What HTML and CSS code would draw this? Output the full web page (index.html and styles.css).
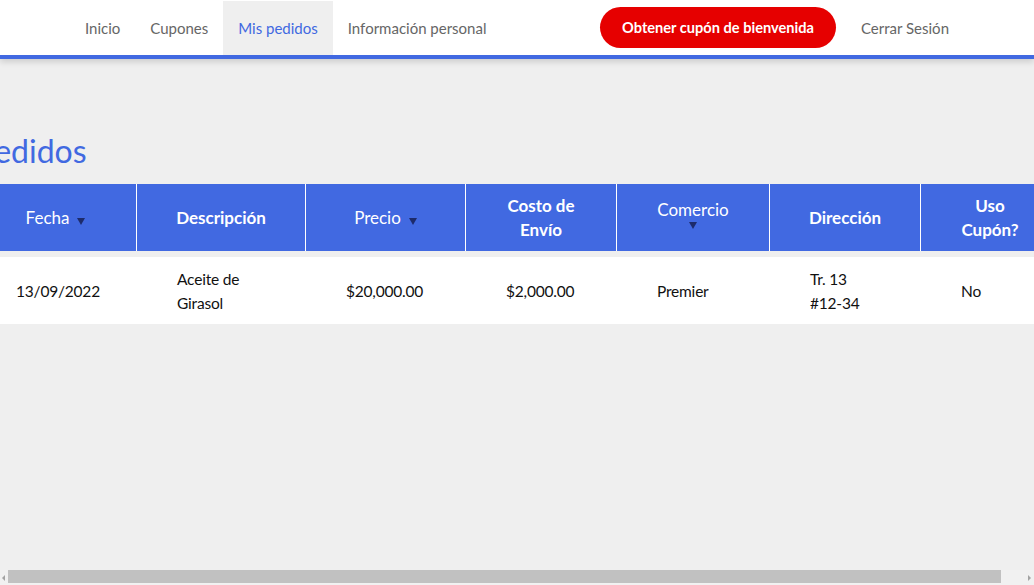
FILE: index.html
```html
<!DOCTYPE html>
<html lang="es">
<head>
<meta charset="utf-8">
<title>Mis pedidos</title>
<link rel="stylesheet" href="styles.css">
</head>
<body>
<header class="topbar">
  <nav class="nav-left">
    <a class="nav-link" href="#">Inicio</a>
    <a class="nav-link" href="#">Cupones</a>
    <a class="nav-link active" href="#">Mis pedidos</a>
    <a class="nav-link" href="#">Información personal</a>
  </nav>
  <div class="nav-right">
    <a class="coupon-btn" href="#">Obtener cupón de bienvenida</a>
    <a class="nav-link" href="#">Cerrar Sesión</a>
  </div>
</header>
<main class="page">
  <section class="orders">
    <h1 class="title">Mis pedidos</h1>
    <table class="orders-table">
      <colgroup>
        <col class="c1"><col class="c2"><col class="c3"><col class="c4"><col class="c5"><col class="c6"><col class="c7">
      </colgroup>
      <thead>
        <tr>
          <th class="sortable">Fecha<span class="arrow"></span></th>
          <th>Descripción</th>
          <th class="sortable">Precio<span class="arrow"></span></th>
          <th>Costo de<br>Envío</th>
          <th class="sortable stacked"><span class="label">Comercio</span><span class="arrow"></span></th>
          <th>Dirección</th>
          <th>Uso<br>Cupón?</th>
        </tr>
      </thead>
      <tbody>
        <tr>
          <td>13/09/2022</td>
          <td>Aceite de<br>Girasol</td>
          <td>$20,000.00</td>
          <td>$2,000.00</td>
          <td>Premier</td>
          <td>Tr. 13<br>#12-34</td>
          <td>No</td>
        </tr>
      </tbody>
    </table>
  </section>
</main>
<div class="hscroll" aria-hidden="true">
  <span class="hs-btn hs-left"></span>
  <span class="hs-thumb"></span>
  <span class="hs-btn hs-right"></span>
</div>
</body>
</html>
```

FILE: styles.css
```css
* { box-sizing: border-box; }
html, body {
  margin: 0;
  padding: 0;
}
body {
  background: #efefef;
  font-family: Lato, "Open Sans", sans-serif;
  color: #111;
}
.topbar {
  height: 59px;
  background: #fff;
  border-bottom: 4px solid #4169e1;
  box-shadow: 0 3px 6px rgba(0, 0, 0, 0.14);
  display: flex;
  justify-content: space-between;
  align-items: stretch;
  padding: 0 70px;
  position: relative;
  z-index: 1;
}
.nav-left, .nav-right {
  display: flex;
  align-items: stretch;
}
.nav-right { align-items: center; }
.nav-link {
  display: flex;
  align-items: center;
  padding: 0 15px;
  font-size: 15px;
  color: #666;
  text-decoration: none;
  height: 55px;
}
.nav-link.active {
  background: #efefef;
  color: #4169e1;
  margin-top: 1px;
  height: 54px;
}
.coupon-btn {
  display: flex;
  align-items: center;
  justify-content: center;
  width: 236px;
  height: 41px;
  margin-right: 10px;
  border-radius: 21px;
  background: #e60000;
  color: #fff;
  font-weight: 700;
  font-size: 14.6px;
  text-decoration: none;
}
.page {
  display: flex;
  justify-content: center;
  padding-top: 70px;
}
.orders {
  width: 1084px;
  flex-shrink: 0;
}
.title {
  margin: 2px 0 13px -58px;
  font-size: 32px;
  line-height: 40px;
  font-weight: 400;
  color: #4169e1;
}
.orders-table {
  width: 1084px;
  table-layout: fixed;
  border-collapse: separate;
  border-spacing: 0;
}
.c1 { width: 161px; }
.c2 { width: 169px; }
.c3 { width: 160px; }
.c4 { width: 151px; }
.c5 { width: 153px; }
.c6 { width: 151px; }
.c7 { width: 139px; }
.orders-table thead tr { height: 67px; }
.orders-table th {
  background: #4169e1;
  color: #fff;
  height: 67px;
  font-size: 17px;
  font-weight: 700;
  line-height: 24px;
  text-align: center;
  padding: 0 8px;
  border-left: 1px solid #fff;
}
.orders-table th:first-child { border-left: none; }
.orders-table th.sortable { font-weight: 400; }
.arrow {
  display: inline-block;
  width: 0;
  height: 0;
  border-left: 4.5px solid transparent;
  border-right: 4.5px solid transparent;
  border-top: 7px solid #1d2b6b;
  margin-left: 8px;
  vertical-align: -1px;
}
.orders-table th.stacked { padding: 0 8px 6px; }
.stacked .label { display: block; line-height: 20px; }
.stacked .arrow {
  display: block;
  margin: 2px auto 0;
}
.orders-table tbody tr { height: 73px; }
.orders-table td {
  background: #fff;
  height: 73px;
  border-top: 6px solid #efefef;
  padding: 0 8px 0 41px;
  font-size: 15.5px;
  letter-spacing: -0.2px;
  line-height: 24px;
  text-align: left;
  color: #111;
}
.hscroll {
  position: fixed;
  left: 0;
  right: 0;
  bottom: 0;
  height: 15px;
  background: #f1f1f1;
  display: flex;
  align-items: center;
  padding: 0 2px;
  gap: 3px;
}
.hs-btn {
  width: 0;
  height: 0;
  border-top: 3.5px solid transparent;
  border-bottom: 3.5px solid transparent;
}
.hs-left { border-right: 3px solid #a3a3a3; }
.hs-right { border-left: 3px solid #a3a3a3; margin-left: auto; margin-right: 1px; }
.hs-thumb {
  width: 993px;
  height: 13px;
  margin-top: -2px;
  background: #c1c1c1;
}
```
